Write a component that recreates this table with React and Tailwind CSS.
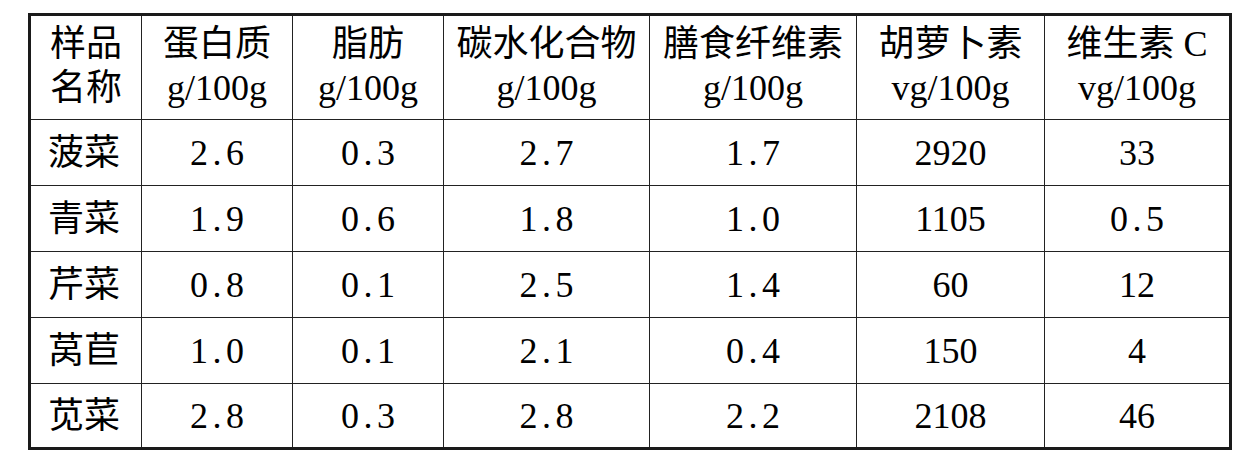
import React from 'react';

const headers = [
  ['样品', '名称'],
  ['蛋白质', 'g/100g'],
  ['脂肪', 'g/100g'],
  ['碳水化合物', 'g/100g'],
  ['膳食纤维素', 'g/100g'],
  ['胡萝卜素', 'vg/100g'],
  ['维生素 C', 'vg/100g'],
];

const rows = [
  ['菠菜', '2.6', '0.3', '2.7', '1.7', '2920', '33'],
  ['青菜', '1.9', '0.6', '1.8', '1.0', '1105', '0.5'],
  ['芹菜', '0.8', '0.1', '2.5', '1.4', '60', '12'],
  ['莴苣', '1.0', '0.1', '2.1', '0.4', '150', '4'],
  ['苋菜', '2.8', '0.3', '2.8', '2.2', '2108', '46'],
];

// decimal columns are typeset with wider spacing
const spaced = [false, true, true, true, true, false, true];

const App = () => {
  return (
    <div className="bg-white w-[1257px] h-[469px] pt-[13px] pl-[28px] text-black font-['Liberation_Serif','Noto_Sans_CJK_SC',serif]">
      <div className="w-[1204px] border-[3px] border-[#1a1a1a] grid grid-cols-[110px_151px_151px_206px_207px_188px_185px] grid-rows-[103px_66px_66px_66px_66px_64px] text-[36px]">
        {headers.map((h, i) => (
          <div
            key={'h' + i}
            className={`flex flex-col items-center justify-center leading-[44px] pb-[4px] ${i > 0 ? 'border-l border-[#222]' : ''}`}
          >
            <span className="whitespace-nowrap">{h[0]}</span>
            <span className="whitespace-nowrap">{h[1]}</span>
          </div>
        ))}
        {rows.map((r, ri) =>
          r.map((v, ci) => (
            <div
              key={ri + '-' + ci}
              className={`flex items-center justify-center border-t border-[#222] ${ci > 0 ? 'border-l' : ''}`}
            >
              <span
                className={
                  ci > 0 && ci < 5 || (ci === 6 && v.includes('.'))
                    ? 'tracking-[4.5px] pl-[4.5px]'
                    : ci === 0
                    ? 'pr-[4px]'
                    : ''
                }
              >
                {v}
              </span>
            </div>
          ))
        )}
      </div>
    </div>
  );
};

export default App;
